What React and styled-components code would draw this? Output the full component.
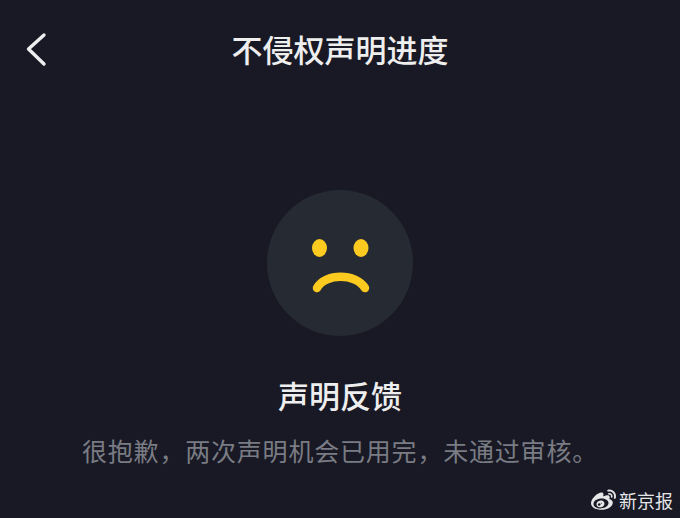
import React from "react";
import styled, { createGlobalStyle } from "styled-components";
import { FaWeibo } from "react-icons/fa";

const GlobalStyle = createGlobalStyle`
    html, body {
        margin: 0;
        padding: 0;
        background: #181924;
    }
    * {
        box-sizing: border-box;
    }
`;

const Page = styled.div`
    position: relative;
    width: 680px;
    height: 518px;
    overflow: hidden;
    background: #181924;
    font-family: "Noto Sans CJK SC", "Liberation Sans", sans-serif;
    display: flex;
    flex-direction: column;
    align-items: center;
`;

const Header = styled.header`
    position: relative;
    width: 100%;
    height: 98px;
    display: flex;
    align-items: center;
    justify-content: center;
`;

const BackButton = styled.svg`
    position: absolute;
    left: 22px;
    top: 29px;
    width: 30px;
    height: 40px;
`;

const Title = styled.h1`
    margin: 0;
    font-size: 31px;
    line-height: 40px;
    font-weight: 500;
    color: #eeeeef;
`;

const FaceCircle = styled.div`
    width: 146px;
    height: 146px;
    margin-top: 92px;
    border-radius: 50%;
    background: #262a33;
    display: flex;
`;

const Heading = styled.h2`
    margin: 39px 0 0;
    font-size: 31px;
    line-height: 40px;
    font-weight: 500;
    color: #eeeeef;
`;

const Message = styled.p`
    margin: 17px 0 0;
    font-size: 25px;
    line-height: 36px;
    letter-spacing: 0.8px;
    font-weight: 400;
    color: #7a7c84;
    white-space: nowrap;
`;

const Watermark = styled.div`
    position: absolute;
    right: 7px;
    bottom: 5px;
    display: flex;
    align-items: center;
    gap: 3px;
    font-size: 18px;
    line-height: 26px;
    color: #e6e6e8;
`;

const MESSAGE = "很抱歉\uFF0C两次声明机会已用完\uFF0C未通过审核。";

const App = () => (
    <Page>
        <GlobalStyle />
        <Header>
            <BackButton viewBox="0 0 30 40" fill="none">
                <path
                    d="M22 6 L6.5 20 L22 35"
                    stroke="#eeeeef"
                    strokeWidth="3.4"
                    strokeLinecap="round"
                    strokeLinejoin="round"
                />
            </BackButton>
            <Title>不侵权声明进度</Title>
        </Header>
        <FaceCircle>
            <svg width="146" height="146" viewBox="0 0 146 146" fill="none">
                <ellipse cx="52.5" cy="58" rx="7.5" ry="9" fill="#fdcb1f" />
                <ellipse cx="94" cy="58" rx="7.5" ry="9" fill="#fdcb1f" />
                <path
                    d="M50 98 C58 83 89 83 98 98"
                    stroke="#fdcb1f"
                    strokeWidth="8.5"
                    strokeLinecap="round"
                />
            </svg>
        </FaceCircle>
        <Heading>声明反馈</Heading>
        <Message>{MESSAGE}</Message>
        <Watermark>
            <FaWeibo size={25} />
            <span>新京报</span>
        </Watermark>
    </Page>
);

export default App;
